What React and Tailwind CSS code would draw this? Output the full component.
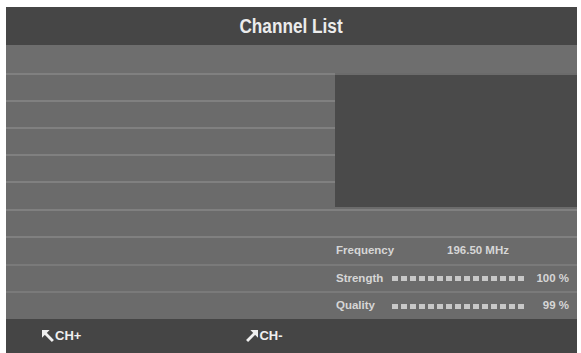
import React from "react";

const font = { fontFamily: '"Liberation Sans Narrow", "Liberation Sans", Arial, sans-serif' };

function Bar() {
  return (
    <div className="flex gap-[3px] items-center">
      {Array.from({ length: 15 }).map((_, i) => (
        <div key={i} className="w-[6px] h-[5px] bg-[#c8c8c8]" />
      ))}
    </div>
  );
}

function ArrowUL() {
  return (
    <svg width="12" height="12" viewBox="0 0 11 11">
      <polygon points="0,0 7,0 0,7" fill="#f0f0f0" />
      <line x1="2" y1="2" x2="10" y2="10" stroke="#f0f0f0" strokeWidth="2.6" />
    </svg>
  );
}

function ArrowUR() {
  return (
    <svg width="12" height="12" viewBox="0 0 11 11">
      <polygon points="11,0 4,0 11,7" fill="#f0f0f0" />
      <line x1="9" y1="2" x2="1" y2="10" stroke="#f0f0f0" strokeWidth="2.6" />
    </svg>
  );
}

export default function App() {
  return (
    <div className="w-[581px] h-[353px] bg-white pt-[7px] pl-[6px] pr-[4px] overflow-hidden" style={font}>
      <div className="flex flex-col h-full bg-[#6c6c6c]">
        <div className="h-[38px] bg-[#464646] flex items-center justify-center">
          <span className="text-[20px] font-bold text-[#ececec] scale-x-[0.86] inline-block">Channel List</span>
        </div>
        <div className="h-[28px] bg-[#6e6e6e]" />
        <div className="flex h-[136px]">
          <div className="w-[329px] flex flex-col">
            {[27, 27, 27, 27, 28].map((h, i) => (
              <div key={i} className="border-t-2 border-[#808080] bg-[#6b6b6b]" style={{ height: h }} />
            ))}
          </div>
          <div className="flex-1 py-[2px] bg-[#6b6b6b]">
            <div className="h-full bg-[#4a4a4a]" />
          </div>
        </div>
        <div className="h-[27px] border-t-2 border-[#808080] bg-[#6b6b6b]" />
        <div className="h-[28px] border-t-2 border-[#808080] bg-[#6b6b6b] flex">
          <div className="w-[329px]" />
          <div className="flex-1 flex items-center text-[11.5px] font-bold text-[#d6d6d6]">
            <span className="pl-[1px] w-[112px]">Frequency</span>
            <span>196.50 MHz</span>
          </div>
        </div>
        <div className="h-[27px] border-t-2 border-[#7a7a7a] bg-[#6b6b6b] flex">
          <div className="w-[329px]" />
          <div className="flex-1 flex items-center text-[11.5px] font-bold text-[#d6d6d6]">
            <span className="pl-[1px] w-[57px]">Strength</span>
            <Bar />
            <span className="ml-auto pr-[8px]">100 %</span>
          </div>
        </div>
        <div className="h-[28px] border-t-2 border-[#7a7a7a] bg-[#6b6b6b] flex">
          <div className="w-[329px]" />
          <div className="flex-1 flex items-center text-[11.5px] font-bold text-[#d6d6d6]">
            <span className="pl-[1px] w-[57px]">Quality</span>
            <Bar />
            <span className="ml-auto pr-[8px]">99 %</span>
          </div>
        </div>
        <div className="flex-1 bg-[#454545] flex items-center text-[13px] font-bold text-[#f0f0f0]">
          <div className="ml-[36px] flex items-center gap-[1px]">
            <ArrowUL />
            <span>CH+</span>
          </div>
          <div className="ml-[165px] flex items-center gap-[1px]">
            <ArrowUR />
            <span>CH-</span>
          </div>
        </div>
      </div>
    </div>
  );
}
